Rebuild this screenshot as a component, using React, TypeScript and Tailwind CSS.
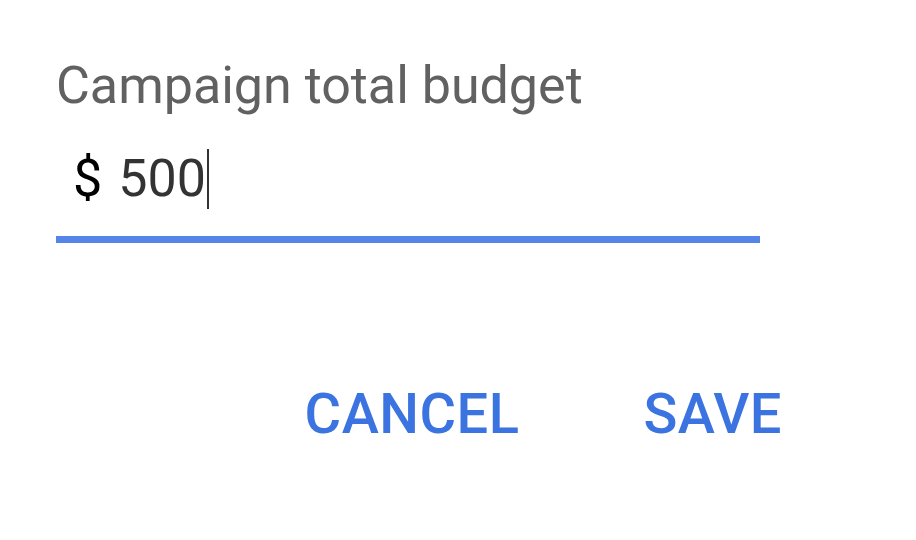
export default function App() {
  return (
    <div className="w-[916px] h-[540px] bg-white font-['Roboto',sans-serif] flex flex-col">
      <div className="pt-[54px] pl-[56px] w-[760px]">
        <div className="text-[52px] leading-[64px] text-[#616161]">Campaign total budget</div>
        <div className="flex items-center h-[64px] mt-[29px] pl-[17px] text-[52px] leading-[64px]">
          <span className="text-black">$</span>
          <span className="ml-[16px] text-[#333333]">500</span>
          <span className="w-[2px] h-[60px] bg-[#333333] ml-[1px]" />
        </div>
        <div className="h-[7px] mt-[25px] bg-[#5585e8]" />
      </div>
      <div className="flex justify-end items-center pr-[134px] mt-[139px] gap-[124px] text-[56px] leading-[64px] font-medium text-[#3b74e0] tracking-[0.5px]">
        <span>CANCEL</span>
        <span>SAVE</span>
      </div>
    </div>
  );
}
